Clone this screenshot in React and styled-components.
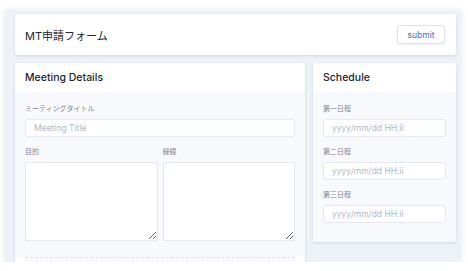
import React from 'react'
import styled, { createGlobalStyle } from 'styled-components'

const Global = createGlobalStyle`
  html, body {
    margin: 0;
    background: #ffffff;
  }
  body {
    font-family: "Inter", "Noto Sans CJK JP", sans-serif;
    color: #2b2f38;
  }
  * { box-sizing: border-box; }
`

const Shell = styled.div`
  margin: 10px 7px 0 5px;
  height: 252px;
  overflow: hidden;
  background: #edf1f8;
  padding: 4px 5px 0 10px;
  box-shadow: 0 0 6px rgba(40, 60, 110, 0.12);
  display: flex;
  flex-direction: column;
  gap: 8px;
`

const Card = styled.div`
  background: #ffffff;
  border-radius: 3px;
  box-shadow: 0 1px 3px rgba(40, 55, 90, 0.14);
  overflow: hidden;
`

const TopBar = styled(Card)`
  flex-shrink: 0;
  height: 41px;
  display: flex;
  align-items: center;
  justify-content: space-between;
  padding: 0 11px 0 10px;
`

const Title = styled.h1`
  margin: 0;
  font-size: 11px;
  font-weight: 400;
  color: #23262d;
`

const Submit = styled.button`
  width: 48px;
  height: 19px;
  padding: 0;
  background: #fff;
  border: 1px solid #dde1e8;
  border-radius: 3px;
  font-family: inherit;
  font-size: 8.5px;
  color: #3b6fd6;
  box-shadow: 0 1px 2px rgba(30, 40, 70, 0.08);
`

const Row = styled.div`
  flex-shrink: 0;
  display: grid;
  grid-template-columns: 290px 1fr;
  gap: 8px;
  align-items: start;
`

const CardHead = styled.div`
  height: 29px;
  display: flex;
  align-items: center;
  padding: 0 10px;
  font-size: 10.5px;
  font-weight: 500;
  color: #23262d;
  background: #fff;
`

const CardBody = styled.div`
  display: flex;
  flex-direction: column;
  gap: 10px;
  background: #f8f9fc;
  padding: 12px 10px ${p => p.$bottom}px;
`

const Footer = styled.div`
  height: 10px;
  background: #f8f9fc;
  margin: 0 10px;
  border-top: 1px dashed #dfe3ea;
`

const Field = styled.div`
  display: flex;
  flex-direction: column;
`

const Label = styled.label`
  font-size: 7px;
  line-height: 10px;
  height: 10px;
  color: #80858f;
  margin-bottom: 5px;
`

const Input = styled.input`
  height: 18px;
  width: 100%;
  border: 1px solid #e4e7ee;
  border-radius: 3px;
  background: #fff;
  padding: 0 8px;
  font-family: inherit;
  font-size: 8.5px;
  outline: none;
  &::placeholder { color: #b4b9c6; }
`

const Pair = styled.div`
  display: grid;
  grid-template-columns: 1fr 1fr;
  gap: 5px;
`

const Area = styled.textarea`
  width: 100%;
  height: 79px;
  border: 1px solid #e4e7ee;
  border-radius: 2px;
  background: #fff;
  display: block;
  outline: none;
`

export default function App() {
  return (
    <>
      <Global />
      <Shell>
        <TopBar>
          <Title>MT申請フォーム</Title>
          <Submit>submit</Submit>
        </TopBar>
        <Row>
          <Card>
            <CardHead>Meeting Details</CardHead>
            <CardBody $bottom={16}>
              <Field>
                <Label>ミーティングタイトル</Label>
                <Input placeholder="Meeting Title" />
              </Field>
              <Pair>
                <Field>
                  <Label>目的</Label>
                  <Area />
                </Field>
                <Field>
                  <Label>経緯</Label>
                  <Area />
                </Field>
              </Pair>
            </CardBody>
            <Footer />
          </Card>
          <Card>
            <CardHead>Schedule</CardHead>
            <CardBody $bottom={19}>
              <Field>
                <Label>第一日程</Label>
                <Input placeholder="yyyy/mm/dd HH:ii" />
              </Field>
              <Field>
                <Label>第二日程</Label>
                <Input placeholder="yyyy/mm/dd HH:ii" />
              </Field>
              <Field>
                <Label>第三日程</Label>
                <Input placeholder="yyyy/mm/dd HH:ii" />
              </Field>
            </CardBody>
          </Card>
        </Row>
      </Shell>
    </>
  )
}
